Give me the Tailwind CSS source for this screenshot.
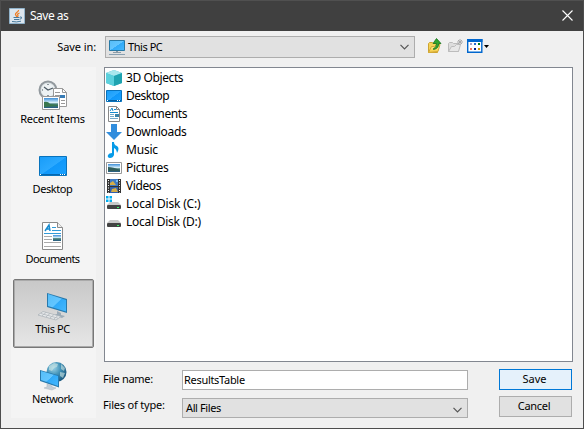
<!DOCTYPE html>
<html lang="en">
<head>
<meta charset="utf-8">
<title>Save as</title>
<script src="https://cdn.jsdelivr.net/npm/@tailwindcss/browser@4"></script>
</head>
<body class="w-[584px] h-[429px] overflow-hidden">
<svg class="absolute w-0 h-0" xmlns="http://www.w3.org/2000/svg">
  <defs>
    <linearGradient id="blue" x1="0" y1="0" x2="1" y2="1"><stop offset="0" stop-color="#189cf8"/><stop offset=".5" stop-color="#2ba9ff"/><stop offset=".52" stop-color="#1098fa"/><stop offset="1" stop-color="#18a0ff"/></linearGradient>
    <linearGradient id="screen" x1="0" y1="0" x2="1" y2="1"><stop offset="0" stop-color="#55bdf8"/><stop offset=".5" stop-color="#63c6ff"/><stop offset=".52" stop-color="#30aaf8"/><stop offset="1" stop-color="#45b8ff"/></linearGradient>
    <linearGradient id="photo" x1="0" y1="0" x2="0" y2="1"><stop offset="0" stop-color="#3e8fd8"/><stop offset=".45" stop-color="#d5eefa"/><stop offset=".6" stop-color="#4d8278"/><stop offset="1" stop-color="#245b83"/></linearGradient>
    <radialGradient id="globe" cx=".35" cy=".3" r=".7"><stop offset="0" stop-color="#9bd2e6"/><stop offset=".5" stop-color="#4494b9"/><stop offset="1" stop-color="#1d5c82"/></radialGradient>
    <linearGradient id="folder" x1="0" y1="0" x2="0" y2="1"><stop offset="0" stop-color="#fff3a2"/><stop offset="1" stop-color="#f3c93e"/></linearGradient>
    <symbol id="desk" viewBox="0 0 16 12"><path d="M.5.5h15v11H.5z" fill="url(#blue)" stroke="#0873bd"/><path d="M1 10.5h14" stroke="#075f9f"/><path d="M1 10.5h1M11 10.5h1M13 10.5h1" stroke="#fff"/></symbol>
  </defs>
</svg>
<main class="w-full h-full flex flex-col bg-[#f0f0f0] border border-t-0 border-[#4d4d4d] text-black text-[11px] font-['Noto_Sans','Open_Sans',sans-serif] whitespace-nowrap">
  <header class="h-[31px] shrink-0 bg-[#404040] border-t border-[#505050] flex items-center pl-2 pr-[10px] pb-px text-white">
    <svg class="w-4 h-4" viewBox="0 0 16 16"><path d="M.5.5h15v15H.5z" fill="#dce6ef" stroke="#91b3cb"/><path d="M9.500 2c.5 2-3.500 2.500-3 4.500.2 1 1.300 1.200 1 2.500M10.500 5c-2.500.8-2 1.500-1.500 2.500.2.500-.3 1-.8 1.500" fill="none" stroke="#ef7c22" stroke-width="1.300"/><path d="M4.500 9.500h6M5 11.500h5M3 13.500q4.500 1 9-.3M11 9q2-.3 1.500 1t-2 1.300" fill="none" stroke="#47799c"/></svg>
    <h1 class="ml-[5px] mt-px text-[12px] leading-4 tracking-[-.5px]">Save as</h1>
    <svg class="ml-auto w-[11px] h-[11px]" viewBox="0 0 11 11"><path d="m.5.5 10 10m0-10-10 10" stroke="#fff" stroke-width="1.100"/></svg>
  </header>

  <section class="h-9 shrink-0 flex items-start pt-[5px]">
    <label class="w-[95px] text-right leading-[22px] tracking-[-.1px]">Save in:</label>
    <div class="ml-[9px] w-[310px] h-[22px] bg-[#e1e1e1] border border-[#adadad] flex items-center pl-[3px] pr-[5px]">
      <svg class="w-4 h-4" viewBox="0 0 16 16"><path d="M.5 1.500h15v10H.5z" fill="url(#screen)" stroke="#2879a5"/><path d="M7 12h2v1h3v1H4v-1h3z" fill="#8b9ba7"/><path d="M0 15.500h16" stroke="#8aa0b1"/></svg>
      <span class="ml-[3px] tracking-[-.45px]">This PC</span>
      <svg class="ml-auto w-[9px] h-[6px]" viewBox="0 0 9 6"><path d="m.5.8 4 4 4-4" fill="none" stroke="#555" stroke-width="1.200"/></svg>
    </div>
    <div class="ml-[12px] mt-[2px] flex gap-1">
      <svg class="w-4 h-4" viewBox="0 0 16 16"><path d="M1.500 14.500v-9l1-1h3l1 1h4v9z" fill="#f5d357" stroke="#cda431"/><path d="m1.500 14.500 3-6h3l2-2h3.500l-2 7z" fill="url(#folder)" stroke="#d4a938"/><path d="M6.500 10.500q3-.5 3-5H6L9.500 .5l4.500 5h-2.300q.2 5-5.200 6z" fill="#31a52f" stroke="#16731c" stroke-width=".8"/></svg>
      <svg class="w-4 h-4" viewBox="0 0 16 16"><path d="M1.500 13.500v-8l1-1h3l1 1h5v8z" fill="#ddd" stroke="#bbb"/><path d="m1.500 13.500 3-5h3l2-2h4l-2 7z" fill="#e7e7e7" stroke="#bcbcbc"/><path d="M13 1v6M10 4h6m-5-2 4 4m0-4-4 4" stroke="#aaa"/></svg>
      <svg class="w-[23px] h-4" viewBox="0 0 23 16"><path d="M.7 1.700h14.100v12.600H.7z" fill="#fff" stroke="#0067ce" stroke-width="1.400"/><path d="M0 1h15.500v3H0z" fill="#0067ce"/><path d="M3 5h2v2H3z" fill="#aaa0c5"/><path d="M7 5h2v2H7z" fill="#276ed0"/><path d="M11 5h2v2h-2z" fill="#087d16"/><path d="M3 10h2v2H3z" fill="#f47756"/><path d="M7 10h2v2H7z" fill="#001c8c"/><path d="M11 10h2v2h-2z" fill="#d29808"/><path d="M17 7h5l-2.500 3z"/></svg>
    </div>
  </section>

  <div class="flex flex-1 min-h-0 pl-[10px]">
    <nav class="w-[85px] h-[351px] bg-[#f4f4f4] pt-[2px] flex flex-col items-center gap-px text-center">
      <div class="w-[81px] h-[69px] pr-[2px] pt-[11px] flex flex-col items-center">
        <svg class="w-8 h-8 ml-[2px]" viewBox="0 0 32 32"><circle cx="10" cy="10" r="8.500" fill="#d9dfe2" stroke="#92999e" stroke-width="2"/><circle cx="10" cy="10" r="6.600" fill="#edf2f4"/><path d="m6 7 4 3 5-2M10 4v1M4 10h1M10 15v1" fill="none" stroke="#4c5963" stroke-width="1.200"/><path d="M15.500 8.500h9l4 4v14h-13z" fill="#fff" stroke="#999"/><path d="M24.500 8.500v4h4M17 12.500h5M17 15.500h5M23 20.500h4M23 23.500h4" fill="none" stroke="#999"/><path d="M22 15h5v3h-5z" fill="#377bb5"/><path d="M4.500 16.500h17v13h-17z" fill="#fff" stroke="#999"/><path d="M6 18h14v10H6z" fill="url(#photo)"/><path d="M6 22q4-1 6 2l8 1v1l-14 1z" fill="#39774e"/></svg>
        <span class="leading-[14px] tracking-[-.25px]">Recent Items</span>
      </div>
      <div class="w-[81px] h-[69px] pr-[2px] pt-[11px] flex flex-col items-center">
        <svg class="w-8 h-8" viewBox="0 0 32 32"><path d="M2.500 6.500h27v19h-27z" fill="url(#blue)" stroke="#0873bd"/><path d="M3 24.500h26" stroke="#0567af"/><path d="M3 24.500h1M23 24.500h1M25 24.500h1M27 24.500h1" stroke="#fff"/></svg>
        <span class="leading-[14px] tracking-[-.4px]">Desktop</span>
      </div>
      <div class="w-[81px] h-[69px] pr-[2px] pt-[11px] flex flex-col items-center">
        <svg class="w-8 h-8" viewBox="0 0 32 32"><path d="M5.500 2.500h15l5 5v22h-20z" fill="#fff" stroke="#8a8a8a"/><path d="M20.500 2.500v5h5" fill="#eee" stroke="#8a8a8a"/><path d="m8 11 4-6 1 6M10 9h3" fill="none" stroke="#158bd0" stroke-width="1.500"/><path d="M15 7.500h4M15 10.500h9M7 13.500h17" stroke="#329bd8"/><path d="M7 16.500h8M7 19.500h8M7 22.500h17M7 26.500h17" stroke="#aaa"/><path d="M16 15h8v6h-8z" fill="url(#photo)"/></svg>
        <span class="leading-[14px] tracking-[-.6px]">Documents</span>
      </div>
      <div class="w-[81px] h-[69px] pr-[2px] pt-[10px] flex flex-col items-center bg-linear-to-b from-[#c8c8c8] to-[#e6e6e6] border border-[#777] rounded-[2px] shadow-[inset_0_0_0_1px_#aaa]">
        <svg class="w-8 h-8" viewBox="0 0 32 32"><path d="m20 21 4 2v2l4 1-3 2-8-3 3-1z" fill="#9cabb7"/><path d="m10 3 20 6v14l-20-6z" fill="#287aad"/><path d="m11 4 18 6v11.500l-18-5.500z" fill="url(#screen)"/><path d="m6 21.500 18 5-5 3.500-18-5z" fill="#e7e9eb" stroke="#a5adb3" stroke-width=".7"/><path d="m4 23.500 17 4.700M9 22.500l-4 3.300m8-2.300-4 3.400m8-2.400-4 3.500m8-2.500-4 3.500" stroke="#b0b6bb" stroke-width=".8"/></svg>
        <span class="leading-[14px] tracking-[-.45px]">This PC</span>
      </div>
      <div class="w-[81px] h-[69px] pr-[2px] pt-[11px] flex flex-col items-center">
        <svg class="w-8 h-8" viewBox="0 0 32 32"><circle cx="19.500" cy="12" r="10" fill="url(#globe)"/><path d="m12 6 5-3 4 1-1 3-3 1-2 3-3-1zM24 4l4 4-1 3-3-2zM23 12l5 1-2 5-3-2z" fill="#d1e7e4" opacity=".6"/><path d="m10 24 5 2v1l4 1-4 2-8-2 3-1z" fill="#c2ced7" stroke="#aab5bd" stroke-width=".5"/><path d="m3 10 19 5.500v12L3 21z" fill="#287aad"/><path d="m4 11 17 5v10L4 20z" fill="url(#screen)"/></svg>
        <span class="leading-[14px] tracking-[-.5px]">Network</span>
      </div>
    </nav>

    <div class="ml-2 w-[469px] flex flex-col">
      <ul class="h-[295px] shrink-0 bg-white border border-[#828790] pl-[1px] pt-[1px] text-[12px] font-['Noto_Sans','Open_Sans',sans-serif]">
        <li class="h-[18px] flex items-center gap-1"><svg class="w-4 h-4" viewBox="0 0 16 16"><path d="m0 3 8-3 8 3v10l-8 3-8-3z" fill="#48c2d3"/><path d="m0 3 8-3 8 3-8 3z" fill="#a9e7ed"/><path d="M0 3l8 3v10l-8-3z" fill="#5bd0dc"/><path d="m8 6 8-3v10l-8 3z" fill="#1fa3b0"/></svg><span class="tracking-[-.4px]">3D Objects</span></li>
        <li class="h-[18px] flex items-center gap-1"><svg class="w-4 h-3"><use href="#desk"/></svg><span class="tracking-[-.5px]">Desktop</span></li>
        <li class="h-[18px] flex items-center gap-1"><svg class="w-4 h-4" viewBox="0 0 16 16"><path d="M2.500.5h8l3 3v12h-11z" fill="#fff" stroke="#888"/><path d="M10.500.5v3h3" fill="none" stroke="#888"/><path d="m4 5 2-3 1 3M8 3.500h2M4 6.500h8" fill="none" stroke="#168bcf"/><path d="M4 8.500h4M4 10.500h4M4 12.500h8" stroke="#70aacd"/><path d="M9 8h4v3H9z" fill="#3a83aa"/></svg><span class="tracking-[-.4px]">Documents</span></li>
        <li class="h-[18px] flex items-center gap-1"><svg class="w-4 h-4" viewBox="0 0 16 16"><path d="M5 0h6v8h5l-8 8-8-8h5z" fill="#318ddd"/></svg><span class="tracking-[-.25px]">Downloads</span></li>
        <li class="h-[18px] flex items-center gap-1"><svg class="w-4 h-4" viewBox="0 0 16 16"><path d="M6 0h2q0 3 3 4 3 2 0 7-.5-4-3-5v7q-1 3-4 3-3-.5-2-3 1-2 4-2z" fill="#079be8"/></svg><span class="tracking-[-.2px]">Music</span></li>
        <li class="h-[18px] flex items-center gap-1"><svg class="w-4 h-4" viewBox="0 0 16 16"><path d="M.5 2.500h15v11H.5z" fill="#fff" stroke="#999"/><path d="M2 4h12v8H2z" fill="url(#photo)"/><path d="M2 7q5 0 12 3v1H2z" fill="#315e5c"/></svg><span class="tracking-[-.35px]">Pictures</span></li>
        <li class="h-[18px] flex items-center gap-1"><svg class="w-4 h-4" viewBox="0 0 16 16"><path d="M1 1h14v14H1z" fill="#333"/><path d="M4 1h8v7H4z" fill="#3f79c2"/><path d="M4 9h8v6H4z" fill="#315fae"/><path d="M4 5l3-2 3 4H4zM6 11l4-1 2 4H5z" fill="#d5ad48"/><path d="M10 2h2v2h-2z" fill="#79bdf1"/><path d="M2.500 2v13M13.500 2v13" stroke="#fff" stroke-dasharray="1 1.500"/></svg><span class="tracking-[-.4px]">Videos</span></li>
        <li class="h-[18px] flex items-center gap-1"><svg class="w-4 h-4" viewBox="0 0 16 16"><path d="M0 0h2.500v2.500H0zM3.500 0H6v2.500H3.500zM0 3.500h2.500V6H0zM3.500 3.500H6V6H3.500z" fill="#00adef"/><path d="m4 6-3 3h14l-3-3z" fill="#c8c8c8"/><rect x="1" y="9" width="14" height="4" rx="1" fill="#434343"/><path d="M11 11.500h2" stroke="#3ef569"/></svg><span class="tracking-[-.2px]">Local Disk (C:)</span></li>
        <li class="h-[18px] flex items-center gap-1"><svg class="w-4 h-4" viewBox="0 0 16 16"><path d="m4 6-3 3h14l-3-3z" fill="#c8c8c8"/><rect x="1" y="9" width="14" height="4" rx="1" fill="#434343"/><path d="M11 11.500h2" stroke="#3ef569"/></svg><span class="tracking-[-.25px]">Local Disk (D:)</span></li>
      </ul>
      <div class="flex pt-[7px]">
        <div class="w-[78px] -ml-px">
          <label class="block h-[26px] leading-[20px] tracking-[-.3px]">File name:</label>
          <label class="block h-[26px] leading-[20px] tracking-[-.2px]">Files of type:</label>
        </div>
        <div class="ml-px w-[286px] pt-px flex flex-col gap-2">
          <input class="block w-[286px] h-5 bg-white border border-[#adadad] pl-px pb-px text-[11px] leading-[17px] tracking-[-.3px]" value="ResultsTable">
          <div class="w-[286px] h-5 bg-[#e1e1e1] border border-[#adadad] flex items-center pl-[3px] pr-[5px] leading-[18px]"><span class="tracking-[-.4px]">All Files</span><svg class="ml-auto mt-[3px] w-[9px] h-[6px]" viewBox="0 0 9 6"><path d="m.5.8 4 4 4-4" fill="none" stroke="#555" stroke-width="1.200"/></svg></div>
        </div>
        <div class="ml-[31px] flex flex-col gap-[6px]">
          <button class="w-[73px] h-[21px] bg-[#e5f1fb] border border-[#0078d7] pr-[2px] leading-[17px] pb-[2px]">Save</button>
          <button class="w-[73px] h-[21px] bg-[#e1e1e1] border border-[#adadad] pr-[3px] leading-[17px] pb-[2px] tracking-[-.3px]">Cancel</button>
        </div>
      </div>
    </div>
  </div>
</main>
</body>
</html>
